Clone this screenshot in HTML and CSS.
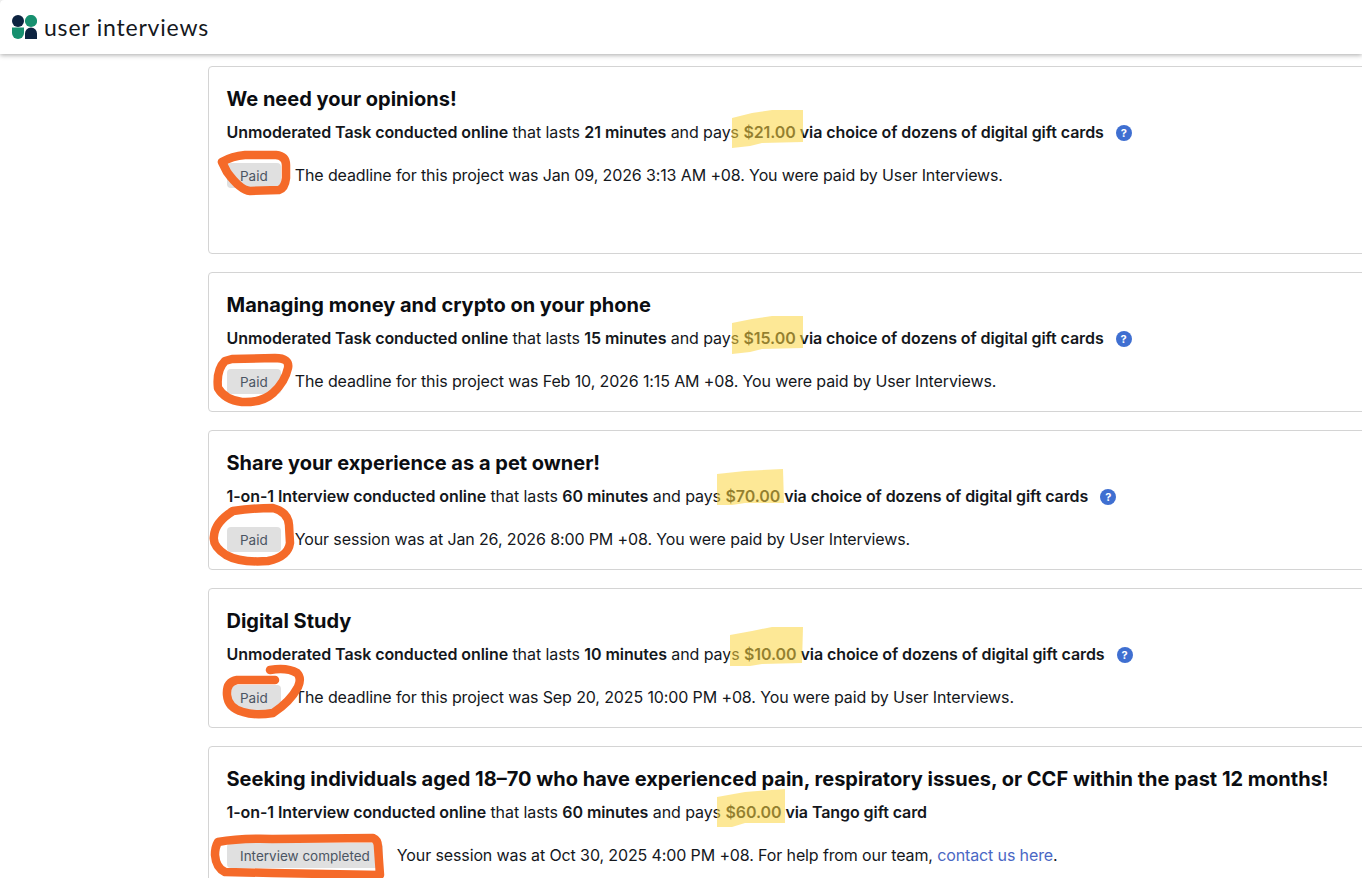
FILE: index.html
```html
<!DOCTYPE html>
<html lang="en">
<head>
<meta charset="utf-8">
<title>User Interviews</title>
<link rel="stylesheet" href="styles.css">
</head>
<body>
<header class="topbar">
  <svg class="logo" width="25" height="24" viewBox="0 0 25 24">
    <circle cx="6" cy="6" r="6" fill="#0c2340"/>
    <circle cx="19" cy="6" r="6.1" fill="#17906f"/>
    <path d="M0 12.5H12V18A6 6 0 0 1 0 18Z" fill="#17906f"/>
    <path d="M13 18.5A6 6 0 0 1 25 18.5V24H13Z" fill="#0c2340"/>
  </svg>
  <span class="brand">user interviews</span>
</header>
<main class="list">
  <article class="card card-tall">
    <h2 class="title">We need your opinions!</h2>
    <p class="meta"><b>Unmoderated Task conducted online</b> that lasts <b>21 minutes</b> and pays <b>$21.00 via choice of dozens of digital gift cards</b><span class="help">?</span></p>
    <div class="status"><span class="badge">Paid</span><span>The deadline for this project was Jan 09, 2026 3:13 AM +08. You were paid by User Interviews.</span></div>
  </article>
  <article class="card">
    <h2 class="title">Managing money and crypto on your phone</h2>
    <p class="meta"><b>Unmoderated Task conducted online</b> that lasts <b>15 minutes</b> and pays <b>$15.00 via choice of dozens of digital gift cards</b><span class="help">?</span></p>
    <div class="status"><span class="badge">Paid</span><span>The deadline for this project was Feb 10, 2026 1:15 AM +08. You were paid by User Interviews.</span></div>
  </article>
  <article class="card">
    <h2 class="title">Share your experience as a pet owner!</h2>
    <p class="meta"><b>1-on-1 Interview conducted online</b> that lasts <b>60 minutes</b> and pays <b>$70.00 via choice of dozens of digital gift cards</b><span class="help">?</span></p>
    <div class="status"><span class="badge">Paid</span><span>Your session was at Jan 26, 2026 8:00 PM +08. You were paid by User Interviews.</span></div>
  </article>
  <article class="card">
    <h2 class="title">Digital Study</h2>
    <p class="meta"><b>Unmoderated Task conducted online</b> that lasts <b>10 minutes</b> and pays <b>$10.00 via choice of dozens of digital gift cards</b><span class="help">?</span></p>
    <div class="status"><span class="badge">Paid</span><span>The deadline for this project was Sep 20, 2025 10:00 PM +08. You were paid by User Interviews.</span></div>
  </article>
  <article class="card">
    <h2 class="title">Seeking individuals aged 18–70 who have experienced pain, respiratory issues, or CCF within the past 12 months!</h2>
    <p class="meta"><b>1-on-1 Interview conducted online</b> that lasts <b>60 minutes</b> and pays <b>$60.00 via Tango gift card</b></p>
    <div class="status"><span class="badge">Interview completed</span><span>Your session was at Oct 30, 2025 4:00 PM +08. For help from our team, <a href="#">contact us here</a>.</span></div>
  </article>
</main>
<svg class="marks" width="1362" height="878" viewBox="0 0 1362 878">
  <g class="hl">
    <path d="M732 118L752 113L772 110L803 110L803 142L762 143L750 146L732 148Z"/>
    <path d="M732 323L752 319L772 316L803 316L803 348L762 349L750 352L732 354Z"/>
    <path d="M717 474L745 471L783 469L784 503L745 503L732 505L717 505Z"/>
    <path d="M730 635L752 631L772 627L803 627L802 663L762 664L750 666L730 666Z"/>
    <path d="M717 797L745 792L785 789L785 823L745 823L732 827L717 827Z"/>
  </g>
  <g class="ink">
    <path d="M222 162Q232 156 245 155L276 155Q286 156 286 165L286 178Q285 188 279 190L250 191Q240 190 227 172Z"/>
    <path d="M232 359L275 358Q290 358 288 368Q285 382 273 393Q262 403 242 402Q225 400 218 388Q216 370 225 361Z"/>
    <path d="M233 511Q252 508 273 508Q288 512 289 525L290 543Q288 557 268 561Q240 563 226 555Q212 546 214 536Q215 522 233 511Z"/>
    <path d="M270 670Q287 667 297 673Q302 678 298 687Q290 702 273 713Q255 716 243 712Q228 708 227 695Q226 682 237 680L275 680"/>
    <path d="M218 842Q240 838 272 839L373 838Q378 840 378 847L380 875L272 873L225 872Q216 868 215 855Q215 847 218 842Z"/>
  </g>
</svg>
</body>
</html>
```
FILE: styles.css
```css
* { box-sizing: border-box; }
html, body { height: 100%; }
body {
  margin: 0;
  width: 1362px;
  height: 878px;
  overflow: hidden;
  position: relative;
  background: #fff;
  color: #14171c;
  font-family: Inter, "Liberation Sans", sans-serif;
  font-size: 16px;
}
.topbar {
  height: 54px;
  display: flex;
  align-items: center;
  gap: 7px;
  padding: 0 0 0 12px;
  background: #fff;
  box-shadow: 0 1px 5px rgba(0, 0, 0, 0.35);
  border-radius: 4px 0 0 0;
}
.logo { display: block; }
.brand {
  font-family: Lato, "Liberation Sans", sans-serif;
  font-size: 23px;
  letter-spacing: 0.8px;
  color: #15181d;
}
.list {
  display: flex;
  flex-direction: column;
  gap: 18px;
  width: 1300px;
  margin: 12px 0 0 208px;
}
.card {
  height: 140px;
  padding: 18px 18px 18px 17.5px;
  border: 1px solid #d4d4d4;
  border-radius: 4px;
  background: #fff;
}
.card-tall { height: 188px; }
.title {
  margin: 0;
  font-size: 20px;
  line-height: 28px;
  font-weight: 650;
  letter-spacing: 0;
  color: #0b0d11;
}
.meta {
  margin: 8px 0 0;
  font-size: 16px;
  line-height: 22px;
  letter-spacing: -0.078px;
}
.meta b { font-weight: 600; }
.help {
  display: inline-flex;
  align-items: center;
  justify-content: center;
  width: 16px;
  height: 16px;
  margin-left: 12px;
  border-radius: 50%;
  background: #3f6fd1;
  color: #fff;
  font-size: 11px;
  font-weight: 700;
  letter-spacing: 0;
  vertical-align: 1px;
}
.status {
  display: flex;
  align-items: center;
  gap: 14px;
  margin: 18px 0 0 0.5px;
  line-height: 24px;
  letter-spacing: -0.12px;
}
.badge {
  display: block;
  height: 25px;
  margin-top: 2px;
  padding: 0 13px;
  border-radius: 4px;
  background: #e0e0e0;
  color: #4b5563;
  font-size: 13.5px;
  line-height: 26px;
  letter-spacing: 0;
}
a { color: #4a67c4; text-decoration: none; }
.marks {
  position: absolute;
  left: 0;
  top: 0;
  pointer-events: none;
}
.hl path { fill: #fbd540; fill-opacity: 0.55; }
.ink path {
  fill: none;
  stroke: #f56a29;
  stroke-width: 8.5;
  stroke-linecap: round;
  stroke-linejoin: round;
}
```
